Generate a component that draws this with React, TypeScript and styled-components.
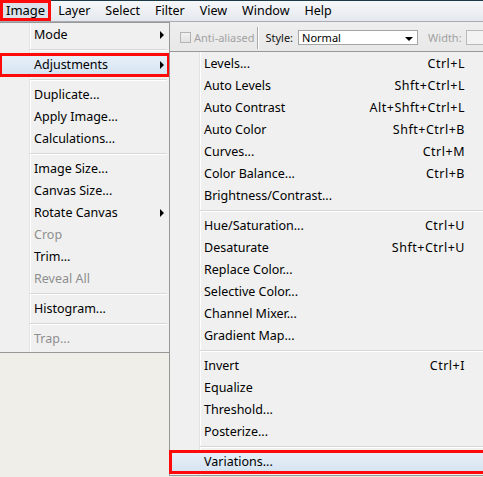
import React from 'react';
import styled, { createGlobalStyle, css } from 'styled-components';

const Global = createGlobalStyle`
  html, body { margin: 0; padding: 0; }
  body {
    width: 483px;
    height: 477px;
    overflow: hidden;
    background: #efeee8;
    font-family: "Noto Sans", "DejaVu Sans", sans-serif;
    -webkit-font-smoothing: antialiased;
  }
`;

const Page = styled.div`
  position: relative;
  width: 483px;
  height: 477px;
  overflow: hidden;
  background: #efeee8;
  display: flex;
  flex-direction: column;
`;

const MenuBar = styled.div`
  height: 21px;
  border-bottom: 1px solid #a9adb3;
  background: linear-gradient(#f7f8fa, #e4e8ee);
  box-shadow: inset 0 1px 0 #1d3946;
  display: flex;
  align-items: stretch;
`;

const TopItem = styled.div<{ $active?: boolean }>`
  padding: 0 8px 0 7px;
  line-height: 21px;
  font-size: 12.5px;
  color: #000;
  ${(p) =>
    p.$active &&
    css`
      padding: 0 6px;
      font-size: 13px;
      background: #dce2e9;
      outline: 3px solid #ff0a0a;
      outline-offset: -3px;
    `}
`;

const OptionsBar = styled.div`
  height: 30px;
  background: linear-gradient(#eeeeee, #e8e8e8);
  border-bottom: 1px solid #c9c9c9;
  display: flex;
  align-items: center;
  padding: 2px 0 0 180px;
  box-sizing: border-box;
  font-size: 11px;
  white-space: nowrap;
  overflow: hidden;
  & > * {
    flex-shrink: 0;
  }
`;

const CheckBox = styled.span`
  width: 9px;
  height: 9px;
  border: 1px solid #b4b4b4;
  background: linear-gradient(#f2f2f2, #e2e2e2);
  margin-right: 3px;
`;

const OptLabel = styled.span<{ $disabled?: boolean; $gap?: number }>`
  color: ${(p) => (p.$disabled ? '#a2a2a2' : '#111')};
  margin-left: ${(p) => p.$gap ?? 0}px;
`;

const VSep = styled.span`
  width: 1px;
  height: 22px;
  background: #a9a9a9;
  box-shadow: 1px 0 0 #fff;
  margin-left: 3px;
`;

const SelectBox = styled.div`
  width: 120px;
  height: 15px;
  box-sizing: border-box;
  margin-left: 5px;
  border: 1px solid #a5a5a5;
  background: #fff;
  display: flex;
  align-items: center;
  justify-content: space-between;
  padding: 0 4px 0 3px;
  font-size: 11px;
  color: #000;
`;

const Caret = styled.span`
  width: 0;
  height: 0;
  border-left: 4px solid transparent;
  border-right: 4px solid transparent;
  border-top: 4px solid #000;
  margin-top: 2px;
`;

const InputBox = styled.div`
  width: 40px;
  height: 15px;
  box-sizing: border-box;
  margin-left: 4px;
  border: 1px solid #b9b9b9;
  background: #f3f3f3;
`;

const Dropdown = styled.div<{ $left: number; $top: number; $width: number; $z: number }>`
  position: absolute;
  left: ${(p) => p.$left}px;
  top: ${(p) => p.$top}px;
  width: ${(p) => p.$width}px;
  z-index: ${(p) => p.$z};
  box-sizing: border-box;
  border: 1px solid #979797;
  padding: 1px 0 2px;
  background: linear-gradient(
    to right,
    #f0f0f0 29px,
    #e2e3e3 29px,
    #e2e3e3 30px,
    #ffffff 30px,
    #ffffff 31px,
    #f0f0f0 31px
  );
  display: flex;
  flex-direction: column;
`;

const Row = styled.div<{ $disabled?: boolean; $selected?: boolean }>`
  height: 22px;
  display: grid;
  grid-template-columns: 1fr auto 18px;
  align-items: center;
  padding: 0 5px 0 34px;
  font-size: 12.5px;
  line-height: 22px;
  white-space: nowrap;
  color: ${(p) => (p.$disabled ? '#8e8e8e' : '#000')};
  ${(p) =>
    p.$selected &&
    css`
      background: linear-gradient(#e9f1f9, #d4e3f1);
      outline: 3px solid #ff0a0a;
      outline-offset: -2px;
    `}
`;

const Shortcut = styled.span`
  text-align: right;
  letter-spacing: 0.5px;
`;

const Arrow = styled.span`
  justify-self: end;
  width: 0;
  height: 0;
  border-top: 4px solid transparent;
  border-bottom: 4px solid transparent;
  border-left: 4px solid #000;
`;

const Separator = styled.div`
  height: 0;
  margin: 3px 2px 3px 30px;
  border-top: 1px solid #d7d7d7;
  border-bottom: 1px solid #ffffff;
`;

type Item =
  | { sep: true }
  | { label: string; shortcut?: string; sub?: boolean; disabled?: boolean; selected?: boolean };

const imageMenu: Item[] = [
  { label: 'Mode', sub: true },
  { sep: true },
  { label: 'Adjustments', sub: true, selected: true },
  { sep: true },
  { label: 'Duplicate...' },
  { label: 'Apply Image...' },
  { label: 'Calculations...' },
  { sep: true },
  { label: 'Image Size...' },
  { label: 'Canvas Size...' },
  { label: 'Rotate Canvas', sub: true },
  { label: 'Crop', disabled: true },
  { label: 'Trim...' },
  { label: 'Reveal All', disabled: true },
  { sep: true },
  { label: 'Histogram...' },
  { sep: true },
  { label: 'Trap...', disabled: true },
];

const adjustMenu: Item[] = [
  { label: 'Levels...', shortcut: 'Ctrl+L' },
  { label: 'Auto Levels', shortcut: 'Shft+Ctrl+L' },
  { label: 'Auto Contrast', shortcut: 'Alt+Shft+Ctrl+L' },
  { label: 'Auto Color', shortcut: 'Shft+Ctrl+B' },
  { label: 'Curves...', shortcut: 'Ctrl+M' },
  { label: 'Color Balance...', shortcut: 'Ctrl+B' },
  { label: 'Brightness/Contrast...' },
  { sep: true },
  { label: 'Hue/Saturation...', shortcut: 'Ctrl+U' },
  { label: 'Desaturate', shortcut: 'Shft+Ctrl+U' },
  { label: 'Replace Color...' },
  { label: 'Selective Color...' },
  { label: 'Channel Mixer...' },
  { label: 'Gradient Map...' },
  { sep: true },
  { label: 'Invert', shortcut: 'Ctrl+I' },
  { label: 'Equalize' },
  { label: 'Threshold...' },
  { label: 'Posterize...' },
  { sep: true },
  { label: 'Variations...', selected: true },
];

const MenuList: React.FC<{ items: Item[] }> = ({ items }) => (
  <>
    {items.map((it, i) =>
      'sep' in it ? (
        <Separator key={i} />
      ) : (
        <Row key={i} $disabled={it.disabled} $selected={it.selected}>
          <span>{it.label}</span>
          <Shortcut>{it.shortcut ?? ''}</Shortcut>
          {it.sub ? <Arrow /> : <span />}
        </Row>
      )
    )}
  </>
);

const topItems = ['Image', 'Layer', 'Select', 'Filter', 'View', 'Window', 'Help'];

export default function App() {
  return (
    <Page>
      <Global />
      <MenuBar>
        {topItems.map((t, i) => (
          <TopItem key={t} $active={i === 0}>
            {t}
          </TopItem>
        ))}
      </MenuBar>
      <OptionsBar>
        <CheckBox />
        <OptLabel $disabled>Anti-aliased</OptLabel>
        <VSep />
        <OptLabel $gap={7}>Style:</OptLabel>
        <SelectBox>
          <span>Normal</span>
          <Caret />
        </SelectBox>
        <OptLabel $disabled $gap={10}>Width:</OptLabel>
        <InputBox />
      </OptionsBar>
      <Dropdown $left={-1} $top={22} $width={171} $z={1}>
        <MenuList items={imageMenu} />
      </Dropdown>
      <Dropdown $left={169} $top={51} $width={320} $z={2}>
        <MenuList items={adjustMenu} />
      </Dropdown>
    </Page>
  );
}
